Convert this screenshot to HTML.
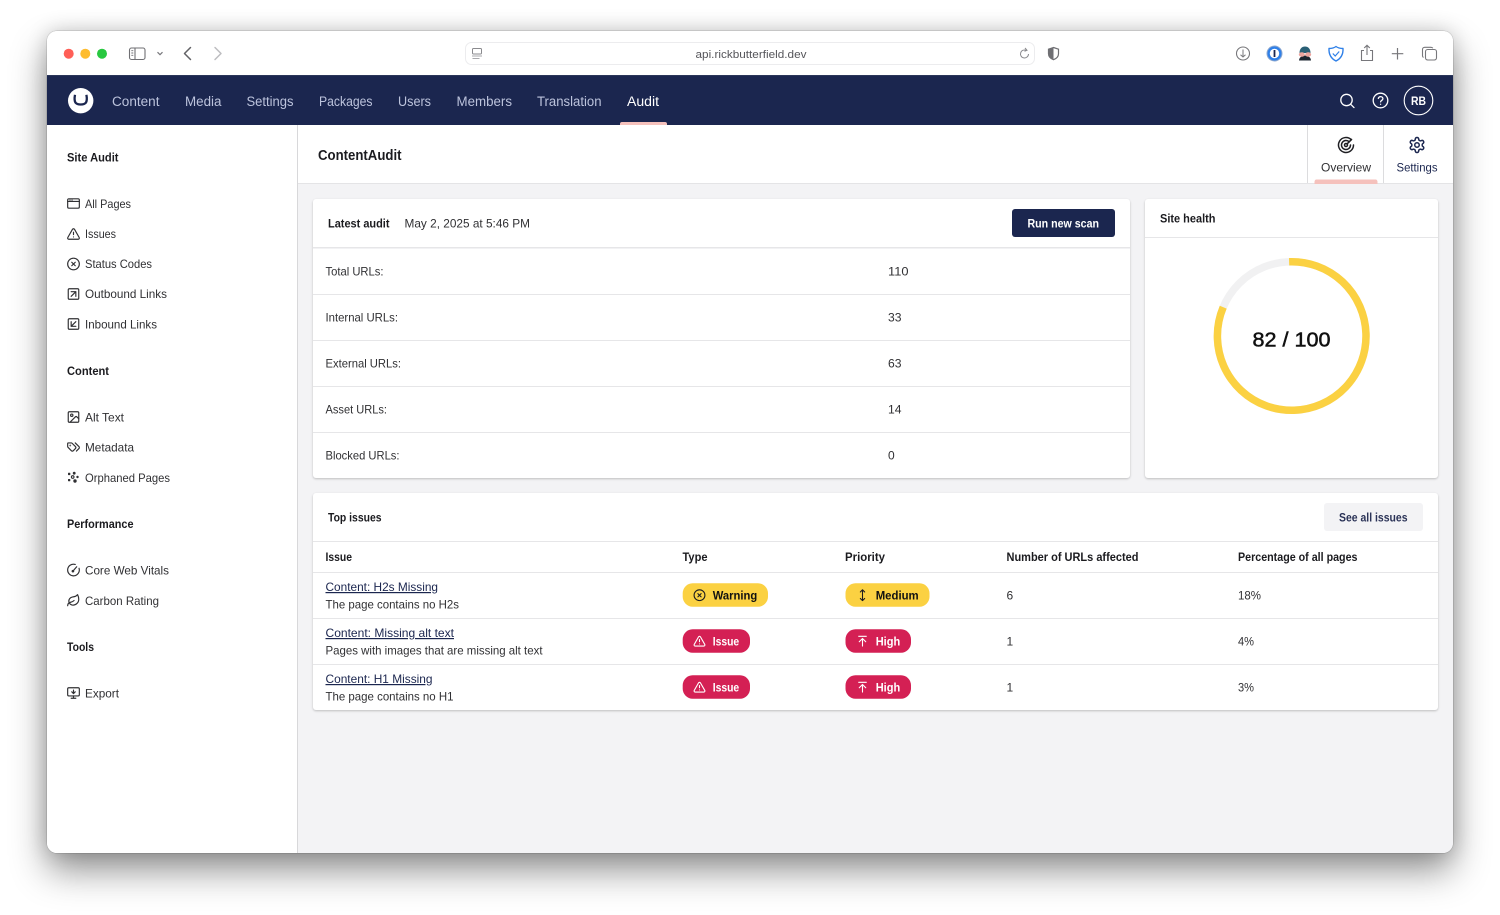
<!DOCTYPE html>
<html lang="en"><head><meta charset="utf-8"><title>ContentAudit</title>
<style>
html,body{margin:0;padding:0;width:1500px;height:915px;overflow:hidden;background:#fff}
#win{position:absolute;left:47px;top:31px;width:1406px;height:822px;border-radius:10px;overflow:hidden;box-shadow:0 18px 36px rgba(0,0,0,.42),0 0 20px rgba(0,0,0,.17),0 0 1px rgba(0,0,0,.6)}
#win svg.main{position:absolute;left:-47px;top:-31px}
text{font-family:"Liberation Sans",sans-serif;font-size:12px;fill:#303033}
.b{font-weight:700;fill:#1b1b1f}
.n{font-size:13.5px;fill:#bcc3dc}
.i{fill:none;stroke:#303033;stroke-width:2;stroke-linecap:round;stroke-linejoin:round}
.l{fill:#1b264f;text-decoration:underline;font-weight:400}
</style></head><body>
<div id="win">
<svg class="main" width="1500" height="915" viewBox="0 0 1500 915" xmlns="http://www.w3.org/2000/svg">
<defs>
<symbol id="pages" viewBox="0 0 24 24"><rect x="2" y="4" width="20" height="16" rx="2"/><path d="M2 8.5h20M6 6.2h.01M9.5 6.2h.01"/></symbol>
<symbol id="alert" viewBox="0 0 24 24"><path d="m21.73 18-8-14a2 2 0 0 0-3.48 0l-8 14A2 2 0 0 0 4 21h16a2 2 0 0 0 1.73-3"/><path d="M12 9v4M12 17h.01"/></symbol>
<symbol id="cx" viewBox="0 0 24 24"><circle cx="12" cy="12" r="10"/><path d="m15 9-6 6M9 9l6 6"/></symbol>
<symbol id="out" viewBox="0 0 24 24"><rect x="3" y="3" width="18" height="18" rx="2"/><path d="M8 8h8v8M8 16l8-8"/></symbol>
<symbol id="in" viewBox="0 0 24 24"><rect x="3" y="3" width="18" height="18" rx="2"/><path d="m16 8-8 8M16 16H8V8"/></symbol>
<symbol id="img" viewBox="0 0 24 24"><rect x="3" y="3" width="18" height="18" rx="2"/><circle cx="9" cy="9" r="2"/><path d="m21 15-3.086-3.086a2 2 0 0 0-2.828 0L6 21"/></symbol>
<symbol id="tags" viewBox="0 0 24 24"><path d="m15 5 6.3 6.3a2.4 2.4 0 0 1 0 3.4L17 19"/><path d="M9.586 5.586A2 2 0 0 0 8.172 5H3a1 1 0 0 0-1 1v5.172a2 2 0 0 0 .586 1.414L8.29 18.29a2.426 2.426 0 0 0 3.42 0l3.58-3.58a2.426 2.426 0 0 0 0-3.42z"/><circle cx="6.5" cy="9.5" r=".5"/></symbol>
<symbol id="gauge" viewBox="0 0 24 24"><path d="M15 2.5A10 10 0 1 0 21.500 9"/><path d="m11 14 6.500-7.500"/><circle cx="11" cy="14" r="1.300"/></symbol>
<symbol id="leaf" viewBox="0 0 24 24"><path d="M11 20A7 7 0 0 1 9.8 6.1C15.5 5 17 4.48 19 2c1 2 2 4.18 2 8 0 5.5-4.78 10-10 10Z"/><path d="M2 21c0-3 1.85-5.36 5.08-6C9.5 14.52 12 13 13 12"/></symbol>
<symbol id="mon" viewBox="0 0 24 24"><path d="M12 13V7M15 10l-3 3-3-3"/><rect x="2" y="3" width="20" height="14" rx="2"/><path d="M12 17v4M8 21h8"/></symbol>
<symbol id="gear" viewBox="0 0 24 24"><path d="M12.22 2h-.44a2 2 0 0 0-2 2v.18a2 2 0 0 1-1 1.73l-.43.25a2 2 0 0 1-2 0l-.15-.08a2 2 0 0 0-2.73.73l-.22.38a2 2 0 0 0 .73 2.73l.15.1a2 2 0 0 1 1 1.72v.51a2 2 0 0 1-1 1.74l-.15.09a2 2 0 0 0-.73 2.73l.22.38a2 2 0 0 0 2.73.73l.15-.08a2 2 0 0 1 2 0l.43.25a2 2 0 0 1 1 1.73V20a2 2 0 0 0 2 2h.44a2 2 0 0 0 2-2v-.18a2 2 0 0 1 1-1.73l.43-.25a2 2 0 0 1 2 0l.15.08a2 2 0 0 0 2.73-.73l.22-.39a2 2 0 0 0-.73-2.73l-.15-.08a2 2 0 0 1-1-1.74v-.5a2 2 0 0 1 1-1.74l.15-.09a2 2 0 0 0 .73-2.73l-.22-.38a2 2 0 0 0-2.73-.73l-.15.08a2 2 0 0 1-2 0l-.43-.25a2 2 0 0 1-1-1.73V4a2 2 0 0 0-2-2z"/><circle cx="12" cy="12" r="3"/></symbol>
<symbol id="radar" viewBox="0 0 24 24"><path d="M19.07 4.93A10 10 0 1 0 22 12"/><path d="M16.24 7.76A6 6 0 1 0 18 12"/><circle cx="12" cy="12" r="2"/><path d="m13.4 10.6 6-6"/></symbol>
<symbol id="mv" viewBox="0 0 24 24"><path d="M12 2v20M8 18l4 4 4-4M8 6l4-4 4 4"/></symbol>
<symbol id="up" viewBox="0 0 24 24"><path d="M5 3h14M18 13l-6-6-6 6M12 7v14"/></symbol>
</defs>

<rect width="1500" height="915" fill="#f3f3f5"/>
<!-- toolbar -->
<rect x="47" y="31" width="1406" height="44" fill="#fff"/>
<circle cx="68.7" cy="53.7" r="5" fill="#ff5f57"/><circle cx="85.3" cy="53.7" r="5" fill="#febc2e"/><circle cx="102" cy="53.7" r="5" fill="#28c840"/>
<g fill="none" stroke="#6f6f73" stroke-width="1.1">
<rect x="129.5" y="48" width="15.5" height="11.5" rx="2"/><path d="M135 48v11.5"/>
<path d="M131.3 50.7h2M131.3 53h2M131.3 55.3h2" stroke-width=".9"/>
</g>
<path d="m157.5 52.2 2.5 2.5 2.5-2.5" fill="none" stroke="#77777b" stroke-width="1.2"/>
<path d="m190.500 47.500-6 6 6 6" fill="none" stroke="#626266" stroke-width="1.5" stroke-linecap="round" stroke-linejoin="round"/>
<path d="m215 47.500 6 6-6 6" fill="none" stroke="#bdbdc0" stroke-width="1.5" stroke-linecap="round" stroke-linejoin="round"/>
<rect x="465.5" y="42.5" width="569" height="22" rx="6" fill="#fff" stroke="#ececee"/>
<rect x="472.5" y="48.5" width="9" height="5.5" rx="1" fill="none" stroke="#8a8a8e"/><path d="M472 56h10M472.5 58.500h7" stroke="#a8a8ac" stroke-width="1"/>
<text x="695.500" y="58" textLength="111" lengthAdjust="spacingAndGlyphs" style="font-size:11px;fill:#55555a">api.rickbutterfield.dev</text>
<path d="M1028.500 54a4 4 0 1 1-2-3.500M1025 48l2 2.300-2.500 1" fill="none" stroke="#8a8a8e" stroke-width="1"/>
<path d="M1053.500 47.500l5 1.700v4.500c0 3-2.500 5-5 6-2.500-1-5-3-5-6v-4.500z" fill="none" stroke="#6f6f73" stroke-width="1.200"/><path d="M1053.500 47.500l-5 1.700v4.500c0 3 2.500 5 5 6z" fill="#6f6f73"/>
<circle cx="1243" cy="53.500" r="6.500" fill="none" stroke="#77777b" stroke-width="1.100"/><path d="M1243 49.500v7.500M1240.500 54.800l2.500 2.200 2.500-2.200" fill="none" stroke="#77777b" stroke-width="1"/>
<circle cx="1274.500" cy="53.500" r="7.500" fill="#2f80e8" stroke="#8fa9cf" stroke-width="1"/><circle cx="1274.500" cy="53.500" r="4.700" fill="#fff"/><rect x="1273.600" y="50" width="1.800" height="7" fill="#1b264f"/>
<path d="M1299.500 53c0-4.500 2.500-6.500 5.500-6.500s5.500 2 5.500 6.500z" fill="#2a6076"/>
<path d="M1299 60.500c.3-3 2-4.500 6-5 4 .5 5.700 2 6 5z" fill="#1c2530"/>
<ellipse cx="1301.800" cy="54.500" rx="3" ry="2.300" fill="#eba59f"/><ellipse cx="1308.200" cy="54.500" rx="3" ry="2.300" fill="#eba59f"/>
<path d="M1336 46.500c2 1.500 4.500 2 7 2 .3 6-2 10-7 12.500-5-2.500-7.300-6.500-7-12.500 2.500 0 5-.5 7-2z" fill="none" stroke="#2f80e8" stroke-width="1.400" stroke-linejoin="round"/><path d="m1332.800 53.500 2.400 2.500 4-4.500" fill="none" stroke="#2f80e8" stroke-width="1.200"/>
<g fill="none" stroke="#77777b" stroke-width="1.100">
<path d="M1364 50.500h-2.500v10h11v-10h-2.500M1367 55V45.500M1364.200 48l2.800-2.700 2.800 2.700"/>
<path d="M1397.500 48v11.500M1391.800 53.700h11.500" stroke-width="1.200"/>
<rect x="1425.500" y="49.500" width="11" height="10.500" rx="2.200"/><path d="M1423.500 57.500c-.6-.300-1-1-1-1.800v-6.200c0-1.200 1-2.200 2.200-2.200h6.300c.8 0 1.500.4 1.800 1"/>
</g>
<!-- nav -->
<rect x="47" y="75" width="1406" height="50" fill="#1b264f"/>
<path d="M47 75.500h1406" stroke="#3d4664" stroke-width=".6"/>
<circle cx="80.700" cy="100.700" r="12.700" fill="#fff"/>
<path d="M75 94.800c-.6 3.200-.6 6 .4 7.700 1 1.500 3 2 5.300 2s4.300-.5 5.300-2c1-1.700 1-4.500.4-7.700" fill="none" stroke="#1b264f" stroke-width="2.300"/>
<text class="n" x="112" y="106" textLength="47.500" lengthAdjust="spacingAndGlyphs">Content</text>
<text class="n" x="185" y="106" textLength="36.500" lengthAdjust="spacingAndGlyphs">Media</text>
<text class="n" x="246.500" y="106" textLength="47" lengthAdjust="spacingAndGlyphs">Settings</text>
<text class="n" x="319" y="106" textLength="53.500" lengthAdjust="spacingAndGlyphs">Packages</text>
<text class="n" x="398" y="106" textLength="33" lengthAdjust="spacingAndGlyphs">Users</text>
<text class="n" x="456.500" y="106" textLength="55.500" lengthAdjust="spacingAndGlyphs">Members</text>
<text class="n" x="537" y="106" textLength="64.500" lengthAdjust="spacingAndGlyphs">Translation</text>
<text class="n" x="627" y="106" textLength="32" lengthAdjust="spacingAndGlyphs" style="fill:#fff">Audit</text>
<path d="M620 125v-1c0-1.300.7-2 2-2h43c1.300 0 2 .7 2 2v1z" fill="#f5c1bc"/>
<g fill="none" stroke="#fff" stroke-width="1.300" stroke-linecap="round">
<circle cx="1346.500" cy="100" r="5.700"/><path d="m1350.700 104.300 3.300 3.300"/>
<circle cx="1380.500" cy="100.500" r="7.300"/><path d="M1378.300 98.400c.4-1.300 1.300-1.800 2.300-1.800 1.300 0 2.300.9 2.300 2 0 1.800-2.300 1.800-2.300 3.300M1380.600 104.300h.01"/>
<circle cx="1418.500" cy="100.500" r="14.300" stroke-width="1.100"/>
</g>
<text x="1411" y="105" textLength="15" lengthAdjust="spacingAndGlyphs" style="font-weight:700;fill:#fff;font-size:11.500px">RB</text>
<!-- sidebar -->
<rect x="47" y="125" width="250" height="728" fill="#fff"/>
<rect x="297" y="125" width="1" height="728" fill="#d8d8da"/>
<text class="b" x="67" y="161.500" textLength="51.500" lengthAdjust="spacingAndGlyphs">Site Audit</text>
<text class="b" x="67" y="375" textLength="42" lengthAdjust="spacingAndGlyphs">Content</text>
<text class="b" x="67" y="528" textLength="66.500" lengthAdjust="spacingAndGlyphs">Performance</text>
<text class="b" x="67" y="651" textLength="27" lengthAdjust="spacingAndGlyphs">Tools</text>
<text x="85" y="208" textLength="46" lengthAdjust="spacingAndGlyphs">All Pages</text>
<text x="85" y="238" textLength="31" lengthAdjust="spacingAndGlyphs">Issues</text>
<text x="85" y="268" textLength="67" lengthAdjust="spacingAndGlyphs">Status Codes</text>
<text x="85" y="298" textLength="82" lengthAdjust="spacingAndGlyphs">Outbound Links</text>
<text x="85" y="328.500" textLength="72" lengthAdjust="spacingAndGlyphs">Inbound Links</text>
<text x="85" y="421.500" textLength="39" lengthAdjust="spacingAndGlyphs">Alt Text</text>
<text x="85" y="451.500" textLength="49" lengthAdjust="spacingAndGlyphs">Metadata</text>
<text x="85" y="482" textLength="85" lengthAdjust="spacingAndGlyphs">Orphaned Pages</text>
<text x="85" y="574.500" textLength="84" lengthAdjust="spacingAndGlyphs">Core Web Vitals</text>
<text x="85" y="605" textLength="74" lengthAdjust="spacingAndGlyphs">Carbon Rating</text>
<text x="85" y="697.500" textLength="34" lengthAdjust="spacingAndGlyphs">Export</text>
<g class="i">
<use href="#pages" x="66.500" y="196.500" width="14" height="14"/>
<use href="#alert" x="66.500" y="227" width="14" height="14"/>
<use href="#cx" x="66.500" y="257" width="14" height="14"/>
<use href="#out" x="66.500" y="287" width="14" height="14"/>
<use href="#in" x="66.500" y="317" width="14" height="14"/>
<use href="#img" x="66.500" y="410" width="14" height="14"/>
<use href="#tags" x="66.500" y="440" width="14" height="14"/>
<use href="#gauge" x="66.500" y="563" width="14" height="14"/>
<use href="#leaf" x="66.500" y="593.500" width="14" height="14"/>
<use href="#mon" x="66.500" y="686" width="14" height="14"/>
</g>
<g fill="#303033"><rect x="68" y="472.800" width="2.300" height="2.300" rx=".5"/><rect x="68" y="479" width="2.300" height="2.300" rx=".5"/><circle cx="72.700" cy="477" r="1.300" fill="none" stroke="#303033" stroke-width="1.100"/><circle cx="75" cy="481" r="1.700"/><circle cx="74.200" cy="473.200" r="1.400"/><circle cx="77.500" cy="477" r="1.200"/></g>
<!-- header -->
<rect x="298" y="125" width="1155" height="58" fill="#fff"/>
<rect x="298" y="183" width="1155" height="1" fill="#e4e4e6"/>
<text x="318" y="160" textLength="83.500" lengthAdjust="spacingAndGlyphs" style="font-size:14.500px;font-weight:700;fill:#1b1b1f">ContentAudit</text>
<rect x="1307" y="125" width="1" height="58" fill="#dcdcde"/><rect x="1383" y="125" width="1" height="58" fill="#dcdcde"/>
<g class="i" style="stroke:#1f1f23"><use href="#radar" x="1337" y="136" width="18" height="18"/></g>
<g class="i" style="stroke:#1b264f"><use href="#gear" x="1408" y="136" width="18" height="18"/></g>
<text x="1321" y="171.500" textLength="50" lengthAdjust="spacingAndGlyphs">Overview</text>
<text x="1396.500" y="171.500" textLength="41" lengthAdjust="spacingAndGlyphs" style="fill:#1b264f">Settings</text>
<path d="M1314.500 184v-2c0-1.500.7-2.500 2-2.500h59c1.300 0 2 1 2 2.500v2z" fill="#f5c1bc"/>
<!-- cards -->
<g style="filter:drop-shadow(0 1px 1px rgba(0,0,0,.22))" fill="#fff">
<rect x="313" y="199" width="817" height="279" rx="3"/>
<rect x="1145" y="199" width="293" height="279" rx="3"/>
<rect x="313" y="493" width="1125" height="217" rx="3"/>
</g>
<!-- latest -->
<text class="b" x="328" y="227.500" textLength="61.500" lengthAdjust="spacingAndGlyphs">Latest audit</text>
<text x="404.500" y="227.500" textLength="125.500" lengthAdjust="spacingAndGlyphs">May 2, 2025 at 5:46 PM</text>
<rect x="1012" y="209" width="103" height="28" rx="3" fill="#1b264f"/>
<text x="1027.500" y="227.500" textLength="71.500" lengthAdjust="spacingAndGlyphs" style="font-weight:700;fill:#fff">Run new scan</text>
<rect x="313" y="247" width="817" height="1.500" fill="#e6e6e8"/>
<g fill="#e6e6e8"><rect x="313" y="294" width="817" height="1"/><rect x="313" y="340" width="817" height="1"/><rect x="313" y="386" width="817" height="1"/><rect x="313" y="432" width="817" height="1"/></g>
<text x="325.500" y="275.500" textLength="58" lengthAdjust="spacingAndGlyphs">Total URLs:</text>
<text x="325.500" y="321.500" textLength="72.500" lengthAdjust="spacingAndGlyphs">Internal URLs:</text>
<text x="325.500" y="367.500" textLength="75.500" lengthAdjust="spacingAndGlyphs">External URLs:</text>
<text x="325.500" y="413.500" textLength="61.500" lengthAdjust="spacingAndGlyphs">Asset URLs:</text>
<text x="325.500" y="459.500" textLength="74" lengthAdjust="spacingAndGlyphs">Blocked URLs:</text>
<text x="888" y="275.500" textLength="20.500" lengthAdjust="spacingAndGlyphs">110</text>
<text x="888" y="321.500" textLength="13.500" lengthAdjust="spacingAndGlyphs">33</text>
<text x="888" y="367.500" textLength="13.500" lengthAdjust="spacingAndGlyphs">63</text>
<text x="888" y="413.500" textLength="13.500" lengthAdjust="spacingAndGlyphs">14</text>
<text x="888" y="459.500">0</text>
<!-- health -->
<text class="b" x="1160" y="222.500" textLength="55.500" lengthAdjust="spacingAndGlyphs">Site health</text>
<rect x="1145" y="237" width="293" height="1" fill="#e6e6e8"/>
<circle cx="1291.700" cy="336" r="74.300" fill="none" stroke="#f1f1f2" stroke-width="7.500"/>
<circle cx="1291.700" cy="336" r="74.300" fill="none" stroke="#fbd142" stroke-width="7.500" pathLength="100" stroke-dasharray="82 100" transform="rotate(-92 1291.700 336)"/>
<text x="1252.500" y="346.500" textLength="78" lengthAdjust="spacingAndGlyphs" style="font-size:20px;font-weight:400;fill:#111;stroke:#111;stroke-width:.5">82 / 100</text>
<!-- issues -->
<text class="b" x="328" y="521.500" textLength="53.500" lengthAdjust="spacingAndGlyphs">Top issues</text>
<rect x="1324" y="503" width="99" height="28" rx="3" fill="#f3f3f5"/>
<text x="1339" y="521.500" textLength="68.500" lengthAdjust="spacingAndGlyphs" style="font-weight:700;font-size:11.800px;fill:#2b3357">See all issues</text>
<g fill="#e6e6e8"><rect x="313" y="541" width="1125" height="1"/><rect x="313" y="572" width="1125" height="1"/><rect x="313" y="618" width="1125" height="1"/><rect x="313" y="664" width="1125" height="1"/></g>
<text class="b" x="325.500" y="561" textLength="26.500" lengthAdjust="spacingAndGlyphs">Issue</text>
<text class="b" x="682.500" y="561" textLength="25" lengthAdjust="spacingAndGlyphs">Type</text>
<text class="b" x="845" y="561" textLength="40" lengthAdjust="spacingAndGlyphs">Priority</text>
<text class="b" x="1006.500" y="561" textLength="132" lengthAdjust="spacingAndGlyphs">Number of URLs affected</text>
<text class="b" x="1238" y="561" textLength="119.500" lengthAdjust="spacingAndGlyphs">Percentage of all pages</text>
<text class="l" x="325.500" y="591" textLength="112.500" lengthAdjust="spacingAndGlyphs">Content: H2s Missing</text>
<text x="325.500" y="608.500" textLength="133.500" lengthAdjust="spacingAndGlyphs">The page contains no H2s</text>
<text class="l" x="325.500" y="637" textLength="128.500" lengthAdjust="spacingAndGlyphs">Content: Missing alt text</text>
<text x="325.500" y="654.500" textLength="217" lengthAdjust="spacingAndGlyphs">Pages with images that are missing alt text</text>
<text class="l" x="325.500" y="683" textLength="107" lengthAdjust="spacingAndGlyphs">Content: H1 Missing</text>
<text x="325.500" y="700.500" textLength="128" lengthAdjust="spacingAndGlyphs">The page contains no H1</text>
<text x="1006.500" y="599.500">6</text><text x="1006.500" y="645.500">1</text><text x="1006.500" y="691.500">1</text>
<text x="1238" y="599.500" textLength="23" lengthAdjust="spacingAndGlyphs">18%</text>
<text x="1238" y="645.500" textLength="16" lengthAdjust="spacingAndGlyphs">4%</text>
<text x="1238" y="691.500" textLength="16" lengthAdjust="spacingAndGlyphs">3%</text>
<!-- badges -->
<rect x="682.700" y="583.300" width="85.300" height="23.400" rx="10" fill="#fbd142"/>
<rect x="845.500" y="583.300" width="84" height="23.400" rx="10" fill="#fbd142"/>
<rect x="682.700" y="629.300" width="67.300" height="23.400" rx="10" fill="#d42054"/>
<rect x="845.500" y="629.300" width="65.500" height="23.400" rx="10" fill="#d42054"/>
<rect x="682.700" y="675.300" width="67.300" height="23.400" rx="10" fill="#d42054"/>
<rect x="845.500" y="675.300" width="65.500" height="23.400" rx="10" fill="#d42054"/>
<g class="i" style="stroke:#1b1b1f"><use href="#cx" x="693" y="588.700" width="13" height="13"/><use href="#mv" x="856" y="588.700" width="13" height="13"/></g>
<g class="i" style="stroke:#fff"><use href="#alert" x="693" y="634.700" width="13" height="13"/><use href="#up" x="856" y="634.700" width="13" height="13"/><use href="#alert" x="693" y="680.700" width="13" height="13"/><use href="#up" x="856" y="680.700" width="13" height="13"/></g>
<text class="b" x="712.700" y="599.500" textLength="44.500" lengthAdjust="spacingAndGlyphs" style="fill:#111">Warning</text>
<text class="b" x="875.700" y="599.500" textLength="43" lengthAdjust="spacingAndGlyphs" style="fill:#111">Medium</text>
<text x="712.700" y="645.500" textLength="26.500" lengthAdjust="spacingAndGlyphs" style="font-weight:700;fill:#fff">Issue</text>
<text x="875.700" y="645.500" textLength="24.500" lengthAdjust="spacingAndGlyphs" style="font-weight:700;fill:#fff">High</text>
<text x="712.700" y="691.500" textLength="26.500" lengthAdjust="spacingAndGlyphs" style="font-weight:700;fill:#fff">Issue</text>
<text x="875.700" y="691.500" textLength="24.500" lengthAdjust="spacingAndGlyphs" style="font-weight:700;fill:#fff">High</text>
</svg>
</div>
</body></html>
